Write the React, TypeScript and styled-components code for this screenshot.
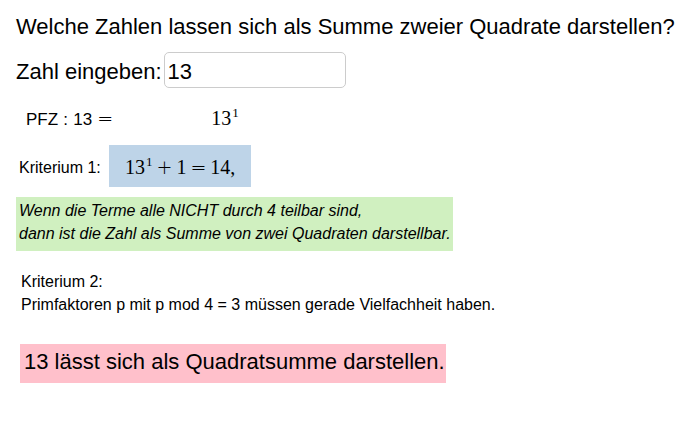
import styled, { createGlobalStyle } from "styled-components";

const Global = createGlobalStyle`
  body {
    margin: 0;
    background: #ffffff;
    font-family: "Liberation Sans", Arial, sans-serif;
    color: #000000;
  }
`;

const Page = styled.div`
  width: 691px;
  height: 437px;
  padding: 15px 0 0 16px;
  box-sizing: border-box;
  display: flex;
  flex-direction: column;
  align-items: flex-start;
`;

const Title = styled.h1`
  margin: 0;
  font-size: 22px;
  line-height: 24px;
  font-weight: normal;
  white-space: nowrap;
`;

const InputRow = styled.div`
  display: flex;
  align-items: center;
  margin-top: 13px;
  height: 36px;
`;

const Label = styled.span`
  font-size: 22px;
  line-height: 24px;
  padding-top: 3px;
`;

const NumberInput = styled.input`
  width: 182px;
  height: 36px;
  box-sizing: border-box;
  margin-left: 2px;
  padding: 3px 0 0 3px;
  border: 1px solid #cccccc;
  border-radius: 5px;
  font-family: "Liberation Sans", Arial, sans-serif;
  font-size: 22px;
  color: #000000;
  outline: none;
`;

const FormulaRow = styled.div`
  display: flex;
  align-items: baseline;
  margin: 18px 0 0 10px;
  height: 24px;
  line-height: 24px;
`;

const SansPart = styled.span`
  font-size: 17px;
  word-spacing: 0.5px;
  white-space: nowrap;
`;

const Math = styled.span<{ $left?: number }>`
  display: inline-flex;
  align-items: baseline;
  margin-left: ${(p) => p.$left ?? 0}px;
  font-family: "Liberation Serif", "Times New Roman", serif;
  font-size: 20px;
  white-space: nowrap;
`;

const Sup = styled.span`
  font-size: 13px;
  position: relative;
  top: -8px;
  margin-left: 1px;
`;

const Op = styled.span<{ $gap?: number }>`
  font-family: "DejaVu Sans", sans-serif;
  font-size: 19px;
  font-weight: 300;
  margin: 0 ${(p) => p.$gap ?? 4}px;
`;

const CriterionRow = styled.div`
  display: flex;
  align-items: center;
  margin-top: 15px;
  height: 42px;
`;

const SmallLabel = styled.span`
  font-size: 16px;
  line-height: 20px;
  margin: 3px 0 0 3px;
  width: 90px;
`;

const Highlight = styled.div<{ $bg: string }>`
  background: ${(p) => p.$bg};
`;

const BlueBox = styled(Highlight)`
  width: 142px;
  height: 42px;
  box-sizing: border-box;
  display: flex;
  align-items: center;
  padding: 3px 0 0 16px;
`;

const GreenBox = styled(Highlight)`
  margin-top: 10px;
  width: 437px;
  box-sizing: border-box;
  padding: 2px 0 6px 3px;
  font-size: 16px;
  line-height: 23px;
  font-style: italic;
`;

const Note = styled.p`
  margin: 19px 0 0 5px;
  font-size: 16px;
  line-height: 23px;
`;

const ResultBox = styled(Highlight)`
  margin: 28px 0 0 4px;
  width: 426px;
  height: 39px;
  box-sizing: border-box;
  padding: 5px 0 0 4px;
  font-size: 22px;
  line-height: 25px;
  white-space: nowrap;
`;

export default function App() {
  const n = 13;
  return (
    <>
      <Global />
      <Page>
        <Title>Welche Zahlen lassen sich als Summe zweier Quadrate darstellen?</Title>
        <InputRow>
          <Label>Zahl eingeben:</Label>
          <NumberInput defaultValue={String(n)} />
        </InputRow>
        <FormulaRow>
          <SansPart>PFZ : {n}</SansPart>
          <Op $gap={5}>=</Op>
          <Math $left={93}>
            {n}
            <Sup>1</Sup>
          </Math>
        </FormulaRow>
        <CriterionRow>
          <SmallLabel>Kriterium 1:</SmallLabel>
          <BlueBox $bg="#bed4e8">
            <Math>
              {n}
              <Sup>1</Sup>
              <Op>+</Op>1<Op>=</Op>14,
            </Math>
          </BlueBox>
        </CriterionRow>
        <GreenBox $bg="#d0f0c0">
          Wenn die Terme alle NICHT durch 4 teilbar sind,
          <br />
          dann ist die Zahl als Summe von zwei Quadraten darstellbar.
        </GreenBox>
        <Note>
          Kriterium 2:
          <br />
          Primfaktoren p mit p mod 4 = 3 müssen gerade Vielfachheit haben.
        </Note>
        <ResultBox $bg="#ffc0cb">{n} lässt sich als Quadratsumme darstellen.</ResultBox>
      </Page>
    </>
  );
}
